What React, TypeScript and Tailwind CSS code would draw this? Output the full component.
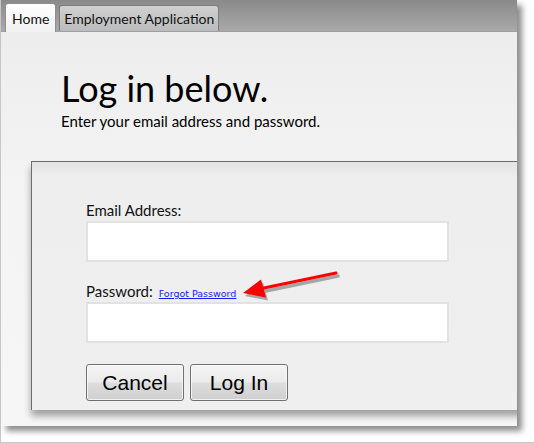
import React from 'react';

const calibri = { fontFamily: 'Lato, "Open Sans", sans-serif' };

function Field({ label, extra }: { label: string; extra?: React.ReactNode }) {
  return (
    <div className="flex flex-col gap-[2px]">
      <div className="flex h-[18px] items-baseline gap-[6px] overflow-visible text-[15px] leading-[18px] text-[#111]">
        <span>{label}</span>
        {extra}
      </div>
      <div className="h-[41px] w-[363px] border-2 border-[#e2e2e2] bg-white" />
    </div>
  );
}

function Btn({ children }: { children: React.ReactNode }) {
  return (
    <button
      className="h-[37px] w-[98px] rounded-[3px] border border-[#707070] bg-[linear-gradient(to_bottom,#f4f4f4_0%,#ebebeb_48%,#dddddd_52%,#cfcfcf_100%)] text-[21px] leading-none text-black shadow-[inset_0_0_0_1px_rgba(255,255,255,0.7)]"
      style={{ fontFamily: '"Liberation Sans", Arial, sans-serif' }}
    >
      {children}
    </button>
  );
}

export default function App() {
  return (
    <div
      className="relative h-[443px] w-[534px] overflow-hidden border-b border-l border-[#c6c6c6] bg-white"
      style={calibri}
    >
      {/* captured window */}
      <div className="flex h-[426px] w-[516px] flex-col overflow-hidden shadow-[5px_5px_6px_rgba(0,0,0,0.45)]">
        {/* tab strip */}
        <div className="flex h-[32px] shrink-0 items-end gap-[3px] border-b border-[#97a2ab] bg-[linear-gradient(to_bottom,#8a8a8a,#a9a9a9)] pl-[4px]">
          <div className="-mb-px flex h-[29px] items-center rounded-t-[3px] border border-b-0 border-[#8e8e8e] bg-[linear-gradient(to_bottom,#ffffff,#f1f1f1)] px-[6px] text-[14px] text-[#111]">
            Home
          </div>
          <div className="flex h-[26px] items-center rounded-t-[3px] border border-b-0 border-[#7c7c7c] bg-[linear-gradient(to_bottom,#d0d0d0,#bcbcbc)] px-[4px] text-[14px] text-[#111]">
            Employment Application
          </div>
        </div>

        {/* page body */}
        <div className="flex flex-1 flex-col bg-[linear-gradient(to_bottom,#ededed,#f4f4f4_40%,#f6f6f6)]">
          <div className="pl-[60px] pt-[38px]">
            <h1 className="text-[36px] leading-none font-normal text-black">Log in below.</h1>
            <p className="mt-[7px] text-[15px] leading-[17px] text-black">
              Enter your email address and password.
            </p>
          </div>

          <div className="ml-[30px] mt-[31px] h-[249px] w-[520px] shrink-0 border-l border-t border-[#6e6e6e] bg-[linear-gradient(to_bottom,#e2e2e2,#eeeeee_14px,#efefef)] pl-[54px] pt-[39px] shadow-[0_6px_7px_rgba(0,0,0,0.35)]">
            <div className="flex flex-col gap-[20px]">
              <Field label="Email Address:" />
              <Field
                label="Password:"
                extra={
                  <a
                    href="#"
                    className="text-[9.5px] leading-[18px] text-[#1a1aff] underline"
                    style={{ fontFamily: '"DejaVu Sans", Verdana, sans-serif' }}
                  >
                    Forgot Password
                  </a>
                }
              />
            </div>
            <div className="mt-[21px] flex gap-[6px]">
              <Btn>Cancel</Btn>
              <Btn>Log In</Btn>
            </div>
          </div>
        </div>
      </div>

      {/* annotation arrow */}
      <svg
        className="absolute left-[230px] top-[265px]"
        width="115"
        height="45"
        viewBox="0 0 115 45"
      >
        <g transform="translate(2 3)" fill="#000" stroke="#000" opacity="0.3">
          <line x1="28" y1="24" x2="105" y2="8" strokeWidth="3.5" strokeLinecap="round" />
          <polygon points="12,28 35,32.5 30,14.5" stroke="none" />
        </g>
        <g fill="#ff0000" stroke="#ff0000">
          <line x1="28" y1="24" x2="105" y2="8" strokeWidth="3" strokeLinecap="round" />
          <polygon points="12,28 35,32.5 30,14.5" stroke="none" />
        </g>
      </svg>
    </div>
  );
}
